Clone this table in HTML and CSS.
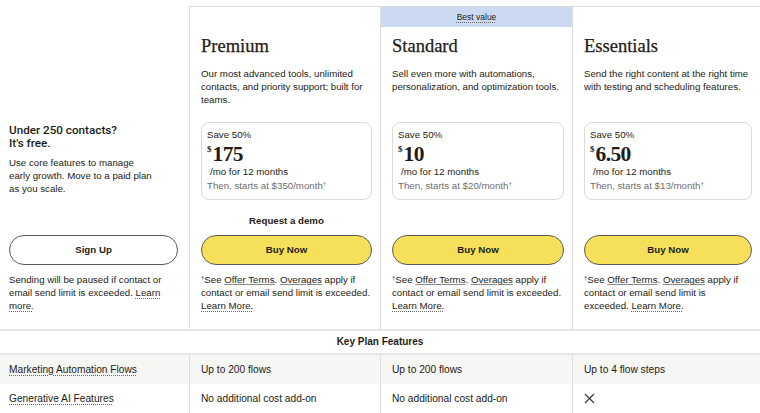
FILE: index.html
```html
<!doctype html>
<html>
<head>
<meta charset="utf-8">
<title>Plans</title>
<link rel="stylesheet" href="styles.css">
</head>
<body>
<div class="page">
    <div class="plans">
        <!-- row 1: plan info -->
        <div class="cell free-top">
            <h3 class="free-title">Under 250 contacts?<br>It's free.</h3>
            <p class="free-desc">Use core features to manage early growth. Move to a paid plan as you scale.</p>
        </div>
        <div class="cell plan plan-top">
            <div class="badge"></div>
            <h2>Premium</h2>
            <p class="desc">Our most advanced tools, unlimited contacts, and priority support; built for teams.</p>
            <div class="price-box">
                <div class="save">Save 50%</div>
                <div class="price"><span class="cur">$</span>175</div>
                <div class="per">/mo for 12 months</div>
                <div class="then">Then, starts at $350/month<span class="dag">†</span></div>
            </div>
        </div>
        <div class="cell plan plan-top">
            <div class="badge best"><span class="dot">Best value</span></div>
            <h2>Standard</h2>
            <p class="desc">Sell even more with automations, personalization, and optimization tools.</p>
            <div class="price-box">
                <div class="save">Save 50%</div>
                <div class="price"><span class="cur">$</span>10</div>
                <div class="per">/mo for 12 months</div>
                <div class="then">Then, starts at $20/month<span class="dag">†</span></div>
            </div>
        </div>
        <div class="cell plan plan-top last">
            <div class="badge"></div>
            <h2>Essentials</h2>
            <p class="desc">Send the right content at the right time with testing and scheduling features.</p>
            <div class="price-box">
                <div class="save">Save 50%</div>
                <div class="price"><span class="cur">$</span>6.50</div>
                <div class="per">/mo for 12 months</div>
                <div class="then">Then, starts at $13/month<span class="dag">†</span></div>
            </div>
        </div>

        <!-- row 2: actions -->
        <div class="cell free-act">
            <div class="demo"></div>
            <a class="btn btn-white" href="javascript:;">Sign Up</a>
            <p class="note">Sending will be paused if contact or email send limit is exceeded. <a class="dot" href="javascript:;">Learn more.</a></p>
        </div>
        <div class="cell plan plan-act">
            <div class="demo">Request a demo</div>
            <a class="btn" href="javascript:;">Buy Now</a>
            <p class="note"><span class="dag">†</span>See <a class="u" href="javascript:;">Offer Terms</a>. <a class="u" href="javascript:;">Overages</a> apply if contact or email send limit is exceeded. <a class="dot" href="javascript:;">Learn More.</a></p>
        </div>
        <div class="cell plan plan-act">
            <div class="demo"></div>
            <a class="btn" href="javascript:;">Buy Now</a>
            <p class="note"><span class="dag">†</span>See <a class="u" href="javascript:;">Offer Terms</a>. <a class="u" href="javascript:;">Overages</a> apply if contact or email send limit is exceeded. <a class="dot" href="javascript:;">Learn More.</a></p>
        </div>
        <div class="cell plan plan-act last">
            <div class="demo"></div>
            <a class="btn" href="javascript:;">Buy Now</a>
            <p class="note"><span class="dag">†</span>See <a class="u" href="javascript:;">Offer Terms</a>. <a class="u" href="javascript:;">Overages</a> apply if contact or email send limit is exceeded. <a class="dot" href="javascript:;">Learn More.</a></p>
        </div>
    </div>

    <div class="features">
        <div class="features-head">Key Plan Features</div>
        <div class="frow shaded">
            <div class="fcell"><span class="dot">Marketing Automation Flows</span></div>
            <div class="fcell">Up to 200 flows</div>
            <div class="fcell">Up to 200 flows</div>
            <div class="fcell">Up to 4 flow steps</div>
        </div>
        <div class="frow">
            <div class="fcell"><span class="dot">Generative AI Features</span></div>
            <div class="fcell">No additional cost add-on</div>
            <div class="fcell">No additional cost add-on</div>
            <div class="fcell">
                <svg class="no" width="11" height="11" viewBox="0 0 11 11"><path d="M1 1L10 10M10 1L1 10" stroke="#3a3a3a" stroke-width="1.2" fill="none"/></svg>
            </div>
        </div>
    </div>
</div>
</body>
</html>
```

FILE: styles.css
```css
body{
    margin:0;
    background:#fff;
    color:#241c15;
    font-family:"Liberation Sans", Arial, sans-serif;
    font-size:9.7px;
    line-height:13px;
    }
h2,h3,p{
    margin:0;
    }
a{
    color:inherit;
    text-decoration:none;
    }
.page{
    padding-top:6px;
    overflow:hidden;
    }
.plans,
.frow{
    display:grid;
    grid-template-columns:189px 191px 192px 188px;
    }
.plans{
    border-bottom:2px solid #e6e6e6;
    }
.cell{
    padding:0 8px 0 11px;
    }
.free-top,
.free-act{
    padding-left:9px;
    padding-right:11px;
    }
.plan{
    border-left:1px solid #dcdcdc;
    }
.plan-top{
    border-top:1px solid #dcdcdc;
    }

/* free column */
.free-top{
    align-self:end;
    padding-bottom:5px;
    }
.free-title{
    font-family:Roboto, "Liberation Sans", sans-serif;
    font-weight:500;
    font-size:11.7px;
    line-height:13px;
    }
.free-desc{
    margin-top:6px;
    max-width:148px;
    }

/* plan header */
.badge{
    height:20px;
    margin:0 -8px 0 -11px;
    text-align:center;
    font-size:8.5px;
    line-height:21px;
    }
.best{
    background:#cbdaf0;
    }
.plan h2{
    margin:8px 0 10px;
    font-family:"Liberation Serif", "Times New Roman", serif;
    font-weight:normal;
    font-size:18.5px;
    line-height:22px;
    -webkit-text-stroke:0.25px #241c15;
    }
.desc{
    min-height:39px;
    }
.price-box{
    margin-top:16px;
    border:1px solid #dadada;
    border-radius:8px;
    padding:5px 6px 6px 5px;
    }
.price{
    font-family:"Liberation Serif", "Times New Roman", serif;
    font-weight:bold;
    font-size:21.5px;
    line-height:24px;
    letter-spacing:-0.6px;
    padding-top:1px;
    height:23px;
    }
.cur{
    font-size:9px;
    line-height:0;
    vertical-align:9px;
    letter-spacing:0;
    margin-right:1px;
    }
.per{
    padding-left:3px;
    line-height:14px;
    }
.then{
    color:#6e6e6e;
    line-height:14px;
    }
.dag{
    font-size:6px;
    line-height:0;
    vertical-align:3px;
    }

/* actions */
.free-act,
.plan-act{
    padding-top:14px;
    padding-bottom:17px;
    }
.demo{
    height:13px;
    margin-bottom:8px;
    text-align:center;
    font-weight:bold;
    }
.btn{
    display:block;
    height:28px;
    line-height:28px;
    border:1px solid #5a5a5a;
    border-radius:15px;
    background:#f6e05a;
    text-align:center;
    font-weight:bold;
    }
.btn-white{
    background:#fff;
    }
.note{
    margin-top:8px;
    }
.u{
    text-decoration:underline;
    text-decoration-color:#8a8a8a;
    text-underline-offset:1px;
    }
.dot{
    text-decoration:underline dotted;
    text-decoration-color:#6a6a6a;
    text-underline-offset:2px;
    }

/* features table */
.features-head{
    height:22px;
    line-height:22px;
    text-align:center;
    font-weight:bold;
    font-size:10px;
    border-bottom:2px solid #e6e6e6;
    }
.frow{
    height:29px;
    font-size:10.2px;
    }
.shaded{
    background:#f6f6f4;
    }
.fcell{
    display:flex;
    align-items:center;
    padding:0 8px 0 11px;
    border-left:1px solid #dcdcdc;
    }
.fcell:first-child{
    padding-left:9px;
    border-left:0;
    }
.no{
    display:block;
    }
```
